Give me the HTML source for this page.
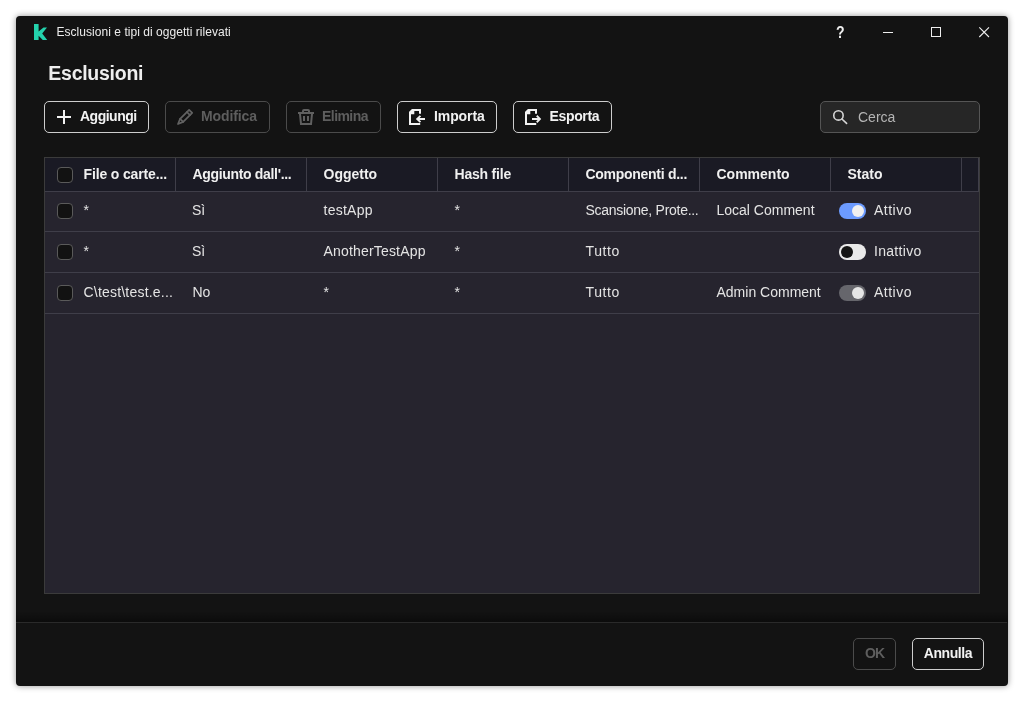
<!DOCTYPE html>
<html lang="it">
<head>
<meta charset="utf-8">
<title>Esclusioni e tipi di oggetti rilevati</title>
<style>
*{box-sizing:border-box;margin:0;padding:0}
html,body{width:1024px;height:702px;overflow:hidden;background:#fff;font-family:"Liberation Sans",sans-serif;}
#win{position:absolute;left:16px;top:16px;width:992px;height:670px;background:#131313;border-radius:4px;box-shadow:0 0 6px rgba(0,0,0,.42)}
.abs{position:absolute}
#ttl{left:56.5px;top:24px;font-size:12px;line-height:16px;color:#ececec;white-space:nowrap;letter-spacing:.04px}
#h1{left:48.3px;top:60px;font-size:19.5px;line-height:26px;font-weight:bold;color:#eee;white-space:nowrap;letter-spacing:-.26px}
.btn{position:absolute;top:101px;height:32px;border:1px solid #cdcdcd;border-radius:5px;color:#f2f2f2;font-weight:bold;font-size:14px;line-height:28px;white-space:nowrap}
.btn.dis{border-color:#4b4b4b;color:#5e5e5e}
.btn span{position:absolute;top:0}
#search{left:820px;top:101px;width:160px;height:32px;background:#262626;border:1px solid #555;border-radius:5px}
#search span{position:absolute;left:37px;top:0;line-height:30px;font-size:14px;color:#b4b4b4}
#tbl{left:44px;top:157px;width:936px;height:437px;background:#26242e;border:1px solid #3b3b3b}
#thead{position:absolute;left:0;top:0;width:934px;height:33px;background:#1a1a24}
.hl{position:absolute;left:0;width:934px;height:1px;background:#3f3e49}
.vl{position:absolute;top:0;width:1px;height:33px;background:#3f3e49}
.th{position:absolute;top:0;line-height:33px;font-size:14px;font-weight:bold;color:#f0f0f0;white-space:nowrap}
.td{position:absolute;line-height:40px;font-size:14px;color:#e4e4e4;white-space:nowrap}
.r1{top:32px}.r2{top:73px}.r3{top:114px}
.cb{position:absolute;left:12px;width:16px;height:16px;border:1px solid #5a5a5a;border-radius:4px;background:#121212}
.tg{position:absolute;left:794px;width:27px;height:16px;border-radius:8px}
.tg i{position:absolute;top:2px;width:12px;height:12px;border-radius:6px}
#foot{left:16px;top:622px;width:991px;height:1px;background:#2a2a2a}
#fsh{left:16px;top:611px;width:992px;height:11px;background:linear-gradient(to bottom,rgba(0,0,0,0),rgba(0,0,0,.4))}
</style>
</head>
<body><div id="root" style="position:absolute;left:0;top:0;width:1024px;height:702px;will-change:transform">
<div id="win"></div>
<div id="ttl" class="abs">Esclusioni e tipi di oggetti rilevati</div>
<div class="abs" style="left:835.5px;top:23.5px;font-size:16px;transform:scaleX(.88);transform-origin:0 0;line-height:18px;font-weight:bold;color:#eee">?</div>
<div id="h1" class="abs">Esclusioni</div>

<div class="btn" style="left:44px;width:105px"><span style="left:35px;letter-spacing:-.5px">Aggiungi</span></div>
<div class="btn dis" style="left:165px;width:105px"><span style="left:35px;letter-spacing:-.1px">Modifica</span></div>
<div class="btn dis" style="left:286px;width:95px"><span style="left:35px;letter-spacing:-.55px">Elimina</span></div>
<div class="btn" style="left:397px;width:100px"><span style="left:36px;letter-spacing:-.1px">Importa</span></div>
<div class="btn" style="left:513px;width:99px"><span style="left:35.5px;letter-spacing:-.35px">Esporta</span></div>

<div id="search" class="abs"><span>Cerca</span></div>

<div id="tbl" class="abs">
 <div id="thead"></div>
 <div class="hl" style="top:33px"></div>
 <div class="hl" style="top:73px"></div>
 <div class="hl" style="top:114px"></div>
 <div class="hl" style="top:155px"></div>
 <div class="vl" style="left:130px"></div>
 <div class="vl" style="left:261px"></div>
 <div class="vl" style="left:392px"></div>
 <div class="vl" style="left:523px"></div>
 <div class="vl" style="left:654px"></div>
 <div class="vl" style="left:785px"></div>
 <div class="vl" style="left:916px"></div>
 <div class="vl" style="left:933px"></div>
 <div class="cb" style="top:9px"></div>
 <div class="th" style="left:38.5px;letter-spacing:-.14px">File o carte...</div>
 <div class="th" style="left:147.5px;letter-spacing:-.33px">Aggiunto dall'...</div>
 <div class="th" style="left:278.5px">Oggetto</div>
 <div class="th" style="left:409.5px;letter-spacing:-.2px">Hash file</div>
 <div class="th" style="left:540.5px;letter-spacing:-.28px">Componenti d...</div>
 <div class="th" style="left:671.5px">Commento</div>
 <div class="th" style="left:802.5px">Stato</div>

 <div class="cb" style="top:45px"></div>
 <div class="td r1" style="left:38.5px">*</div>
 <div class="td r1" style="left:147px">Sì</div>
 <div class="td r1" style="left:278.5px;letter-spacing:.25px">testApp</div>
 <div class="td r1" style="left:409.5px">*</div>
 <div class="td r1" style="left:540.5px;letter-spacing:-.28px">Scansione, Prote...</div>
 <div class="td r1" style="left:671.5px">Local Comment</div>
 <div class="tg" style="top:45px;background:#6c9bff"><i style="left:13px;background:#f0f0f0"></i></div>
 <div class="td r1" style="left:829px;letter-spacing:.5px">Attivo</div>

 <div class="cb" style="top:86px"></div>
 <div class="td r2" style="left:38.5px">*</div>
 <div class="td r2" style="left:147px">Sì</div>
 <div class="td r2" style="left:278.5px;letter-spacing:.18px">AnotherTestApp</div>
 <div class="td r2" style="left:409.5px">*</div>
 <div class="td r2" style="left:540.5px;letter-spacing:.6px">Tutto</div>
 <div class="tg" style="top:86px;background:#eaeaea"><i style="left:2px;background:#151515"></i></div>
 <div class="td r2" style="left:829px;letter-spacing:.3px">Inattivo</div>

 <div class="cb" style="top:127px"></div>
 <div class="td r3" style="left:38.5px;letter-spacing:.2px">C\test\test.e...</div>
 <div class="td r3" style="left:147.5px">No</div>
 <div class="td r3" style="left:278.5px">*</div>
 <div class="td r3" style="left:409.5px">*</div>
 <div class="td r3" style="left:540.5px;letter-spacing:.6px">Tutto</div>
 <div class="td r3" style="left:671.5px">Admin Comment</div>
 <div class="tg" style="top:127px;background:#66666c"><i style="left:13px;background:#e6e6e6"></i></div>
 <div class="td r3" style="left:829px;letter-spacing:.5px">Attivo</div>
</div>

<div id="fsh" class="abs"></div>
<div id="foot" class="abs"></div>
<div class="btn dis" style="left:853px;top:638px;width:43px"><span style="left:11px;letter-spacing:-1px">OK</span></div>
<div class="btn" style="left:912px;top:638px;width:72px"><span style="left:10.8px;letter-spacing:-.45px">Annulla</span></div>

<svg class="abs" style="left:0;top:0" width="1024" height="702" viewBox="0 0 1024 702">
 <!-- logo -->
 <path d="M34,24H38.6V31.5L43.5,27.4H47L42.2,33.4L47.2,40H42.8L38.6,35.8V40H34Z" fill="#24d2ad"/>
 <!-- window controls -->
 <path d="M883,32.5H893" stroke="#eee" stroke-width="1"/>
 <rect x="931.5" y="27.5" width="9" height="9" fill="none" stroke="#eee" stroke-width="1"/>
 <path d="M979.3,27.3L989,37M989,27.3L979.3,37" stroke="#eee" stroke-width="1.1"/>
 <!-- plus -->
 <path d="M57,116h14v2h-14zM63,110h2v14h-2z" fill="#f2f2f2"/>
 <!-- pencil -->
 <g fill="none" stroke="#626262" stroke-width="1.7" stroke-linejoin="round" stroke-linecap="round">
  <path d="M189.1,109.8L192.2,112.9L183.2,121.9L178,124L180.1,118.8Z"/>
  <path d="M180.1,118.8L183.2,121.9M186.9,112L190,115.1"/>
 </g>
 <!-- trash -->
 <g fill="none" stroke="#606060" stroke-width="2">
  <path d="M303,112V111a1,1 0 0 1 1,-1h4a1,1 0 0 1 1,1V112"/>
  <path d="M300,114L301,124H311L312,114"/>
 </g>
 <path d="M298,112h16v2h-16zM303,116h2v5h-2zM307,116h2v5h-2z" fill="#606060"/>
 <!-- import -->
 <path d="M420,113.8V110H412.5L410,112.5V124H420.2" fill="none" stroke="#f2f2f2" stroke-width="2"/>
 <path d="M415.8,119L419.8,115.2L421.1,116.5L419.5,118H425V120H419.5L421.1,121.5L419.8,122.8Z" fill="#f2f2f2"/>
 <path d="M409.3,112L412,109.3H414.3V114.2H409.3Z" fill="#f2f2f2"/>
 <!-- export -->
 <path d="M536,113.8V110H528.5L526,112.5V124H536.2" fill="none" stroke="#f2f2f2" stroke-width="2"/>
 <path d="M541.2,119L537.4,115.1L536.1,116.4L537.7,118H532V120H537.7L536.1,121.6L537.4,122.9Z" fill="#f2f2f2"/>
 <path d="M525.3,112L528,109.3H530.3V114.2H525.3Z" fill="#f2f2f2"/>
 <!-- search -->
 <g fill="none" stroke="#d6d6d6" stroke-width="1.6" stroke-linecap="round">
  <circle cx="838.45" cy="115.45" r="4.7"/>
  <path d="M841.9,119L846.6,123.4"/>
 </g>
</svg>
</div></body>
</html>
